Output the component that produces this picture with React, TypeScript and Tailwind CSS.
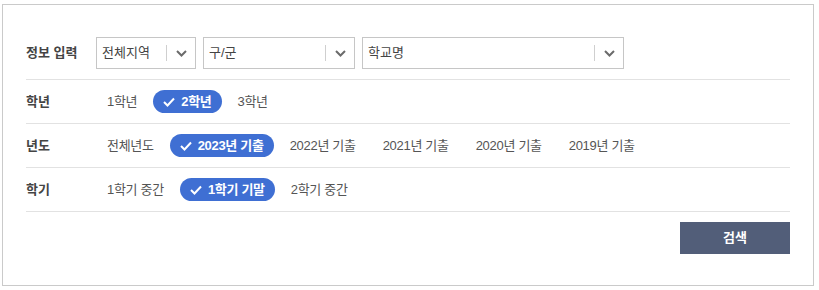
import React, { useState } from 'react';

const FONT = "font-['Liberation_Sans','Noto_Sans_CJK_KR',sans-serif]";

const Chevron = () => (
  <svg width="11" height="7" viewBox="0 0 11 7" fill="none">
    <path d="M1 1L5.5 5.5L10 1" stroke="#6b6b6b" strokeWidth="2" />
  </svg>
);

const Check = () => (
  <svg width="12" height="10" viewBox="0 0 12 10" fill="none" className="mr-[6px]">
    <path d="M1 5L4.5 8.5L11 1.5" stroke="#fff" strokeWidth="2" />
  </svg>
);

interface SelectBoxProps {
  label: string;
  width: string;
}

const SelectBox: React.FC<SelectBoxProps> = ({ label, width }) => (
  <div className={`${width} h-[32px] border border-[#c6c6c6] flex items-center bg-white`}>
    <span className="flex-1 pl-[5px] text-[13px] text-[#444]">{label}</span>
    <span className="w-px h-[16px] bg-[#cfcfcf]" />
    <span className="w-[28px] flex justify-center">
      <Chevron />
    </span>
  </div>
);

interface OptionRowProps {
  label: string;
  options: string[];
  initial: number;
}

const OptionRow: React.FC<OptionRowProps> = ({ label, options, initial }) => {
  const [active, setActive] = useState(initial);
  return (
    <div className="h-[44px] border-b border-[#e2e2e2] flex items-center">
      <div className="w-[70px] text-[13px] font-semibold text-[#444]">{label}</div>
      <div className="flex items-center gap-[5px] tracking-[-0.3px]">
        {options.map((opt, i) =>
          i === active ? (
            <button
              key={opt}
              className="h-[23px] px-[10px] rounded-full bg-[#3f6fd3] text-white text-[13px] font-bold flex items-center"
            >
              <Check />
              {opt}
            </button>
          ) : (
            <button
              key={opt}
              onClick={() => setActive(i)}
              className="h-[23px] px-[11px] text-[13px] text-[#555] flex items-center"
            >
              {opt}
            </button>
          )
        )}
      </div>
    </div>
  );
};

export default function App() {
  return (
    <div className={`${FONT} bg-white min-h-[290px] pl-[2px] pt-[4px]`}>
      <div className="w-[812px] h-[282px] border border-[#cacaca] pt-[32px] px-[23px] flex flex-col">
        <div className="flex items-center pb-[10px] border-b border-[#e2e2e2]">
          <div className="w-[70px] text-[13px] font-semibold text-[#444]">정보 입력</div>
          <div className="flex gap-[7px]">
            <SelectBox label="전체지역" width="w-[100px]" />
            <SelectBox label="구/군" width="w-[152px]" />
            <SelectBox label="학교명" width="w-[262px]" />
          </div>
        </div>
        <OptionRow label="학년" options={['1학년', '2학년', '3학년']} initial={1} />
        <OptionRow
          label="년도"
          options={['전체년도', '2023년 기출', '2022년 기출', '2021년 기출', '2020년 기출', '2019년 기출']}
          initial={1}
        />
        <OptionRow label="학기" options={['1학기 중간', '1학기 기말', '2학기 중간']} initial={1} />
        <div className="flex justify-end mt-[10px]">
          <button className="w-[110px] h-[32px] bg-[#525e79] text-white text-[13px] font-bold">검색</button>
        </div>
      </div>
    </div>
  );
}
